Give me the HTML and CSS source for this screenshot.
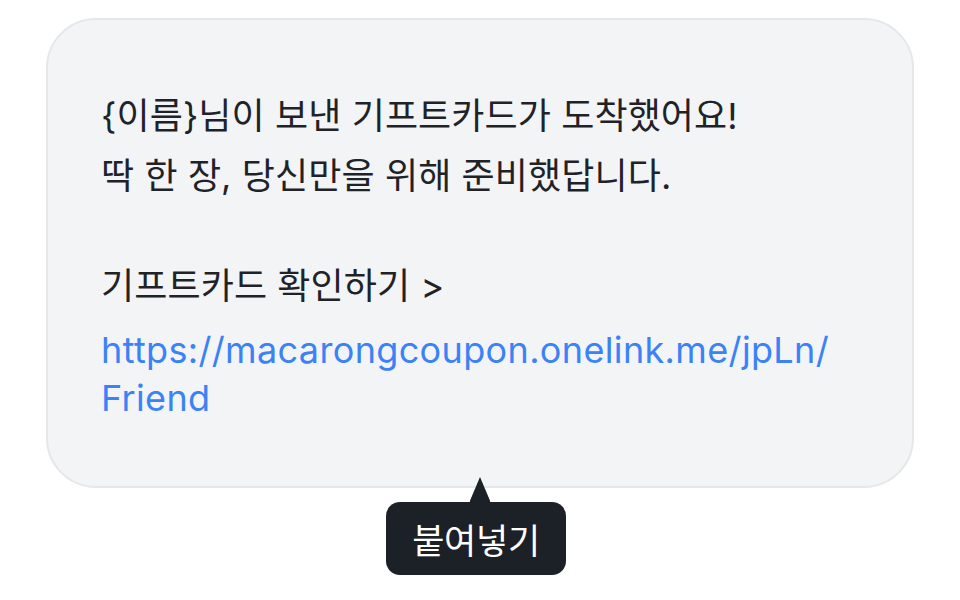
FILE: index.html
```html
<!DOCTYPE html>
<html lang="ko">
<head>
<meta charset="utf-8">
<link rel="stylesheet" href="styles.css">
</head>
<body>
<div class="page">
  <div class="card">
    <p class="line">{이름}님이 보낸 기프트카드가 도착했어요!</p>
    <p class="line">딱 한 장, 당신만을 위해 준비했답니다.</p>
    <p class="line blank">&nbsp;</p>
    <p class="line">기프트카드 확인하기 &gt;</p>
    <p class="line link">https://macarongcoupon.onelink.me/jpLn/<wbr>Friend</p>
  </div>
  <div class="tip-wrap">
    <div class="tip">붙여넣기</div>
  </div>
</div>
</body>
</html>
```
FILE: styles.css
```css
html, body {
  margin: 0;
  padding: 0;
  background: #ffffff;
}
body {
  width: 960px;
  height: 600px;
  font-family: "Inter", "Noto Sans CJK KR", sans-serif;
}
.page {
  padding-top: 18px;
  display: flex;
  flex-direction: column;
  align-items: center;
}
.card {
  box-sizing: border-box;
  width: 868px;
  height: 470px;
  background: #f3f4f6;
  border: 2px solid #e5e7eb;
  border-radius: 50px;
  padding: 72px 53px 0 53px;
  display: flex;
  flex-direction: column;
}
.line {
  margin: 0 0 12px 0;
  font-size: 36px;
  line-height: 48px;
  color: #1f2328;
  letter-spacing: 0.1px;
}
.line.blank {
  height: 38px;
  line-height: 38px;
}
.line.link {
  color: #3b82f6;
  margin-top: 4px;
  letter-spacing: 0.35px;
}
.tip-wrap {
  width: 868px;
  display: flex;
  justify-content: center;
}
.tip {
  position: relative;
  margin-top: 14px;
  margin-left: -8px;
  width: 180px;
  height: 73px;
  box-sizing: border-box;
  background: #1c2128;
  border-radius: 14px;
  color: #ffffff;
  font-size: 35px;
  display: flex;
  align-items: center;
  justify-content: center;
  letter-spacing: -0.3px;
}
.tip::before {
  content: "";
  position: absolute;
  top: -25px;
  left: 83px;
  width: 22px;
  height: 26px;
  background: #1c2128;
  clip-path: polygon(50% 0, 100% 100%, 0 100%);
  border-radius: 4px;
}
```
